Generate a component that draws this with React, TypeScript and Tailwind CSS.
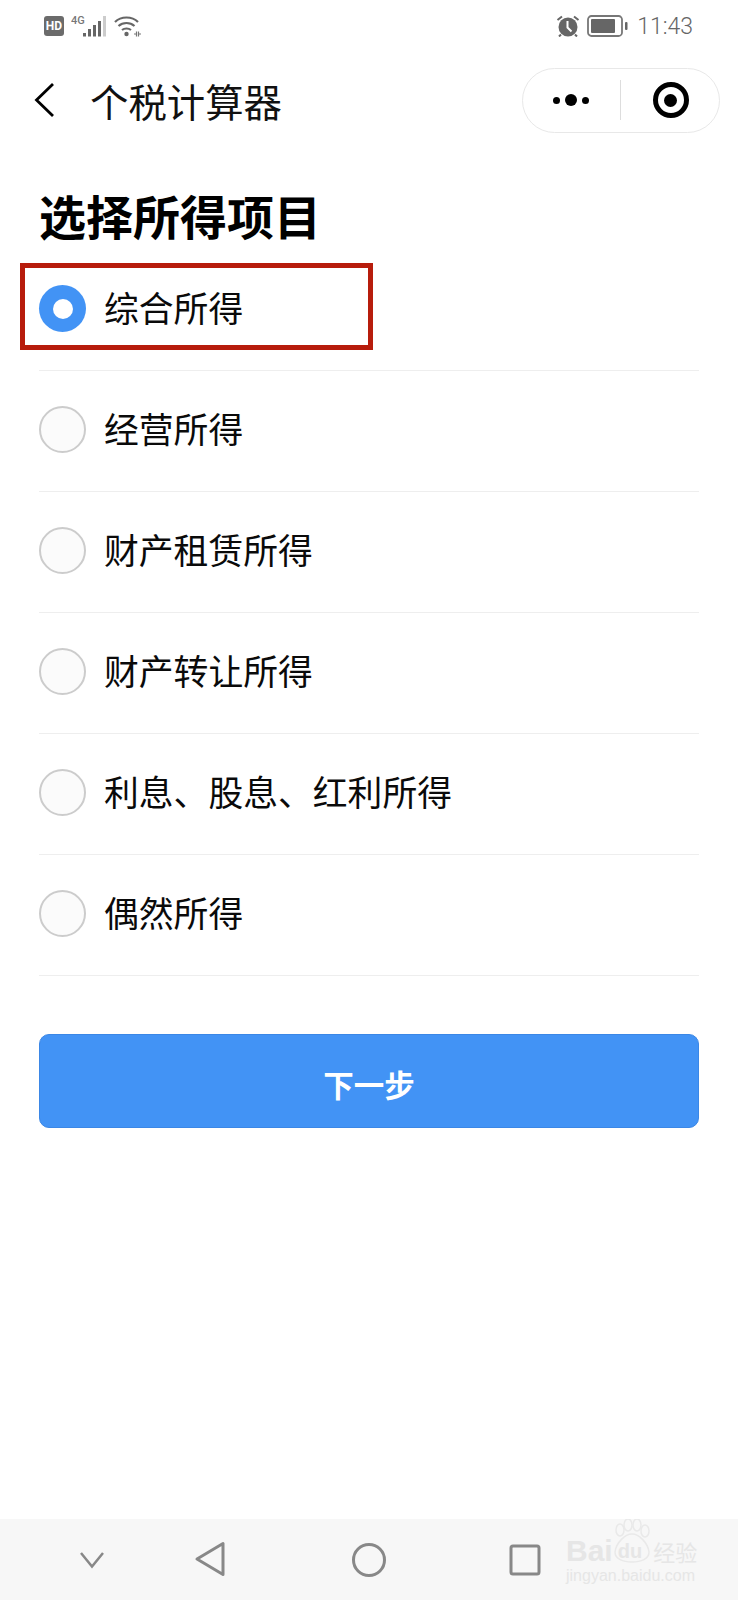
const items = ["综合所得", "经营所得", "财产租赁所得", "财产转让所得", "利息、股息、红利所得", "偶然所得"];

const cjk = "font-['Noto_Sans_CJK_SC','Noto_Sans',sans-serif]";

function StatusBar() {
  return (
    <div className="h-[51px] flex items-center justify-between pl-[44px] pr-[45px] pt-[1px] text-[#666]">
      <div className="flex items-center gap-[7px]">
        <div className="w-[20px] h-[20px] rounded-[3px] bg-[#6b6b6b] text-white text-[12px] font-bold flex items-center justify-center font-['Roboto',sans-serif]">
          HD
        </div>
        <svg width="36" height="22" viewBox="0 0 36 22">
          <text x="0" y="9" fontSize="11" fontWeight="500" fill="#777" fontFamily="Roboto, sans-serif">4G</text>
          <rect x="12" y="18" width="3" height="3.500" fill="#666" />
          <rect x="17" y="14" width="3" height="7.500" fill="#666" />
          <rect x="22" y="10" width="3" height="11.500" fill="#666" />
          <rect x="27" y="6" width="3" height="15.500" fill="#666" />
          <rect x="32" y="1" width="3" height="20.500" fill="#ccc" />
        </svg>
        <svg width="27" height="22" viewBox="0 0 27 22" fill="none">
          <path d="M1 7C7 1 18 1 24 7" stroke="#666" strokeWidth="2.200" />
          <path d="M4.500 11C9 7 16 7 20.500 11" stroke="#666" strokeWidth="2.200" />
          <path d="M8 15C10.500 13 14.500 13 17 15" stroke="#666" strokeWidth="2.200" />
          <circle cx="12.500" cy="19" r="2.200" fill="#666" />
          <path d="M20 19h3M24 19h3M22.500 16.500v5M24.500 16.500v5" stroke="#777" strokeWidth="1.200" />
        </svg>
      </div>
      <div className="flex items-center gap-[7px]">
        <svg width="24" height="22" viewBox="0 0 24 22" fill="none">
          <circle cx="12" cy="12" r="9.500" fill="#666" />
          <path d="M11.500 6v6.500l4 4" stroke="#fff" strokeWidth="2" />
          <path d="M1.500 5L6 1.500M22.500 5L18 1.500M5 19.500L3 21.500M19 19.500L21 21.500" stroke="#666" strokeWidth="2" />
        </svg>
        <svg width="41" height="22" viewBox="0 0 41 22" fill="none">
          <rect x="1" y="1" width="34" height="20" rx="3.500" stroke="#777" strokeWidth="1.800" />
          <rect x="4" y="4" width="24" height="14" rx="1" fill="#666" />
          <rect x="38" y="7" width="2.500" height="8" rx="1" fill="#666" />
        </svg>
        <span className="ml-[2px] text-[23px] leading-none font-['Roboto',sans-serif] font-light">11:43</span>
      </div>
    </div>
  );
}

function TitleBar() {
  return (
    <div className="h-[66px] mt-[16px] flex items-center justify-between pr-[18px] pl-[33px]">
      <div className="flex items-center">
        <svg width="22" height="36" viewBox="0 0 22 36" fill="none">
          <path d="M20 2L3.500 18L20 34" stroke="#000" strokeWidth="2.800" />
        </svg>
        <span className={`ml-[35px] text-[38.400px] leading-none text-[#111] ${cjk}`}>个税计算器</span>
      </div>
      <div className="w-[198px] h-[65px] rounded-full border border-[#e8e8e8] bg-white flex items-center">
        <div className="w-[97px] flex items-center justify-center gap-[5px] pr-[1px]">
          <span className="w-[7px] h-[7px] rounded-full bg-black" />
          <span className="w-[12px] h-[12px] rounded-full bg-black" />
          <span className="w-[7px] h-[7px] rounded-full bg-black" />
        </div>
        <div className="w-px h-[40px] bg-[#ddd]" />
        <div className="flex-1 flex items-center justify-center pl-[1px]">
          <div className="w-[36px] h-[36px] rounded-full border-[5px] border-black flex items-center justify-center">
            <span className="w-[13px] h-[13px] rounded-full bg-black" />
          </div>
        </div>
      </div>
    </div>
  );
}

function NavBar() {
  return (
    <div className="h-[81px] bg-[#f7f7f7] relative flex items-center">
      <svg className="ml-[79px]" width="26" height="18" viewBox="0 0 26 18" fill="none">
        <path d="M2 2L13 15.500L24 2" stroke="#888" strokeWidth="2.500" />
      </svg>
      <svg className="ml-[89px] -mt-[1px]" width="32" height="36" viewBox="0 0 32 36" fill="none">
        <path d="M29 2.500V33.500L3 18Z" stroke="#888" strokeWidth="3" strokeLinejoin="round" />
      </svg>
      <svg className="ml-[125px]" width="36" height="36" viewBox="0 0 36 36" fill="none">
        <circle cx="18" cy="18" r="15.500" stroke="#888" strokeWidth="3" />
      </svg>
      <svg className="ml-[122px]" width="32" height="32" viewBox="0 0 32 32" fill="none">
        <rect x="2" y="2" width="28" height="28" rx="2" stroke="#888" strokeWidth="3" />
      </svg>
      {/* baidu watermark */}
      <div className="absolute left-[566px] top-0 w-[132px] text-[#e6e6e6] font-['Liberation_Sans',sans-serif]">
        <svg className="absolute left-[44px] top-0" width="44" height="44" viewBox="0 0 44 44" fill="none" stroke="#e9e9e9" strokeWidth="1.500">
          <ellipse cx="10" cy="11" rx="4" ry="6" />
          <ellipse cx="18" cy="6" rx="4" ry="6" />
          <ellipse cx="27" cy="6" rx="4" ry="6" />
          <ellipse cx="35" cy="12" rx="4" ry="6" />
          <path d="M22 15C15 15 6 24 5 33C5 40 13 43 22 43C31 43 39 40 39 33C38 24 29 15 22 15Z" />
        </svg>
        <div className="relative pt-[16px] h-[48px] flex items-center leading-none whitespace-nowrap">
          <span className="text-[30px] font-bold">Bai</span>
          <span className="ml-[5px] text-[20px] font-bold">du</span>
          <span className={`ml-[11px] text-[22px] ${cjk}`}>经验</span>
        </div>
        <div className="text-[16px] leading-[18px] whitespace-nowrap">jingyan.baidu.com</div>
      </div>
    </div>
  );
}

export default function App() {
  return (
    <div className={`w-[738px] h-[1600px] bg-white flex flex-col ${cjk}`}>
      <StatusBar />
      <TitleBar />
      <div className="flex-1 px-[39px]">
        <h1 className="mt-[52px] text-[47px] leading-[60px] font-bold text-black">选择所得项目</h1>
        <ul className="relative mt-[5px]">
          {items.map((label, i) => (
            <li key={label} className="h-[121px] border-b border-[#eeeeee] flex items-center gap-[18px] pb-[3px]">
              {i === 0 ? (
                <span className="w-[47px] h-[47px] rounded-full bg-[#4293f5] flex items-center justify-center">
                  <span className="w-[20px] h-[20px] rounded-full bg-white" />
                </span>
              ) : (
                <span className="w-[47px] h-[47px] rounded-full border-2 border-[#cccccc] bg-[#fbfbfb]" />
              )}
              <span className="mb-[2px] text-[34.800px] leading-none text-[#0a0a0a]">{label}</span>
            </li>
          ))}
          <li className="absolute left-[-19px] top-[13px] w-[353px] h-[87px] border-[5px] border-[#b71c0c] list-none" />
        </ul>
        <button className="mt-[58px] w-full h-[94px] rounded-[10px] bg-[#4293f5] border border-[#3b87e6] pt-[8px] text-white text-[30.500px] font-bold flex items-center justify-center">
          下一步
        </button>
      </div>
      <NavBar />
    </div>
  );
}
